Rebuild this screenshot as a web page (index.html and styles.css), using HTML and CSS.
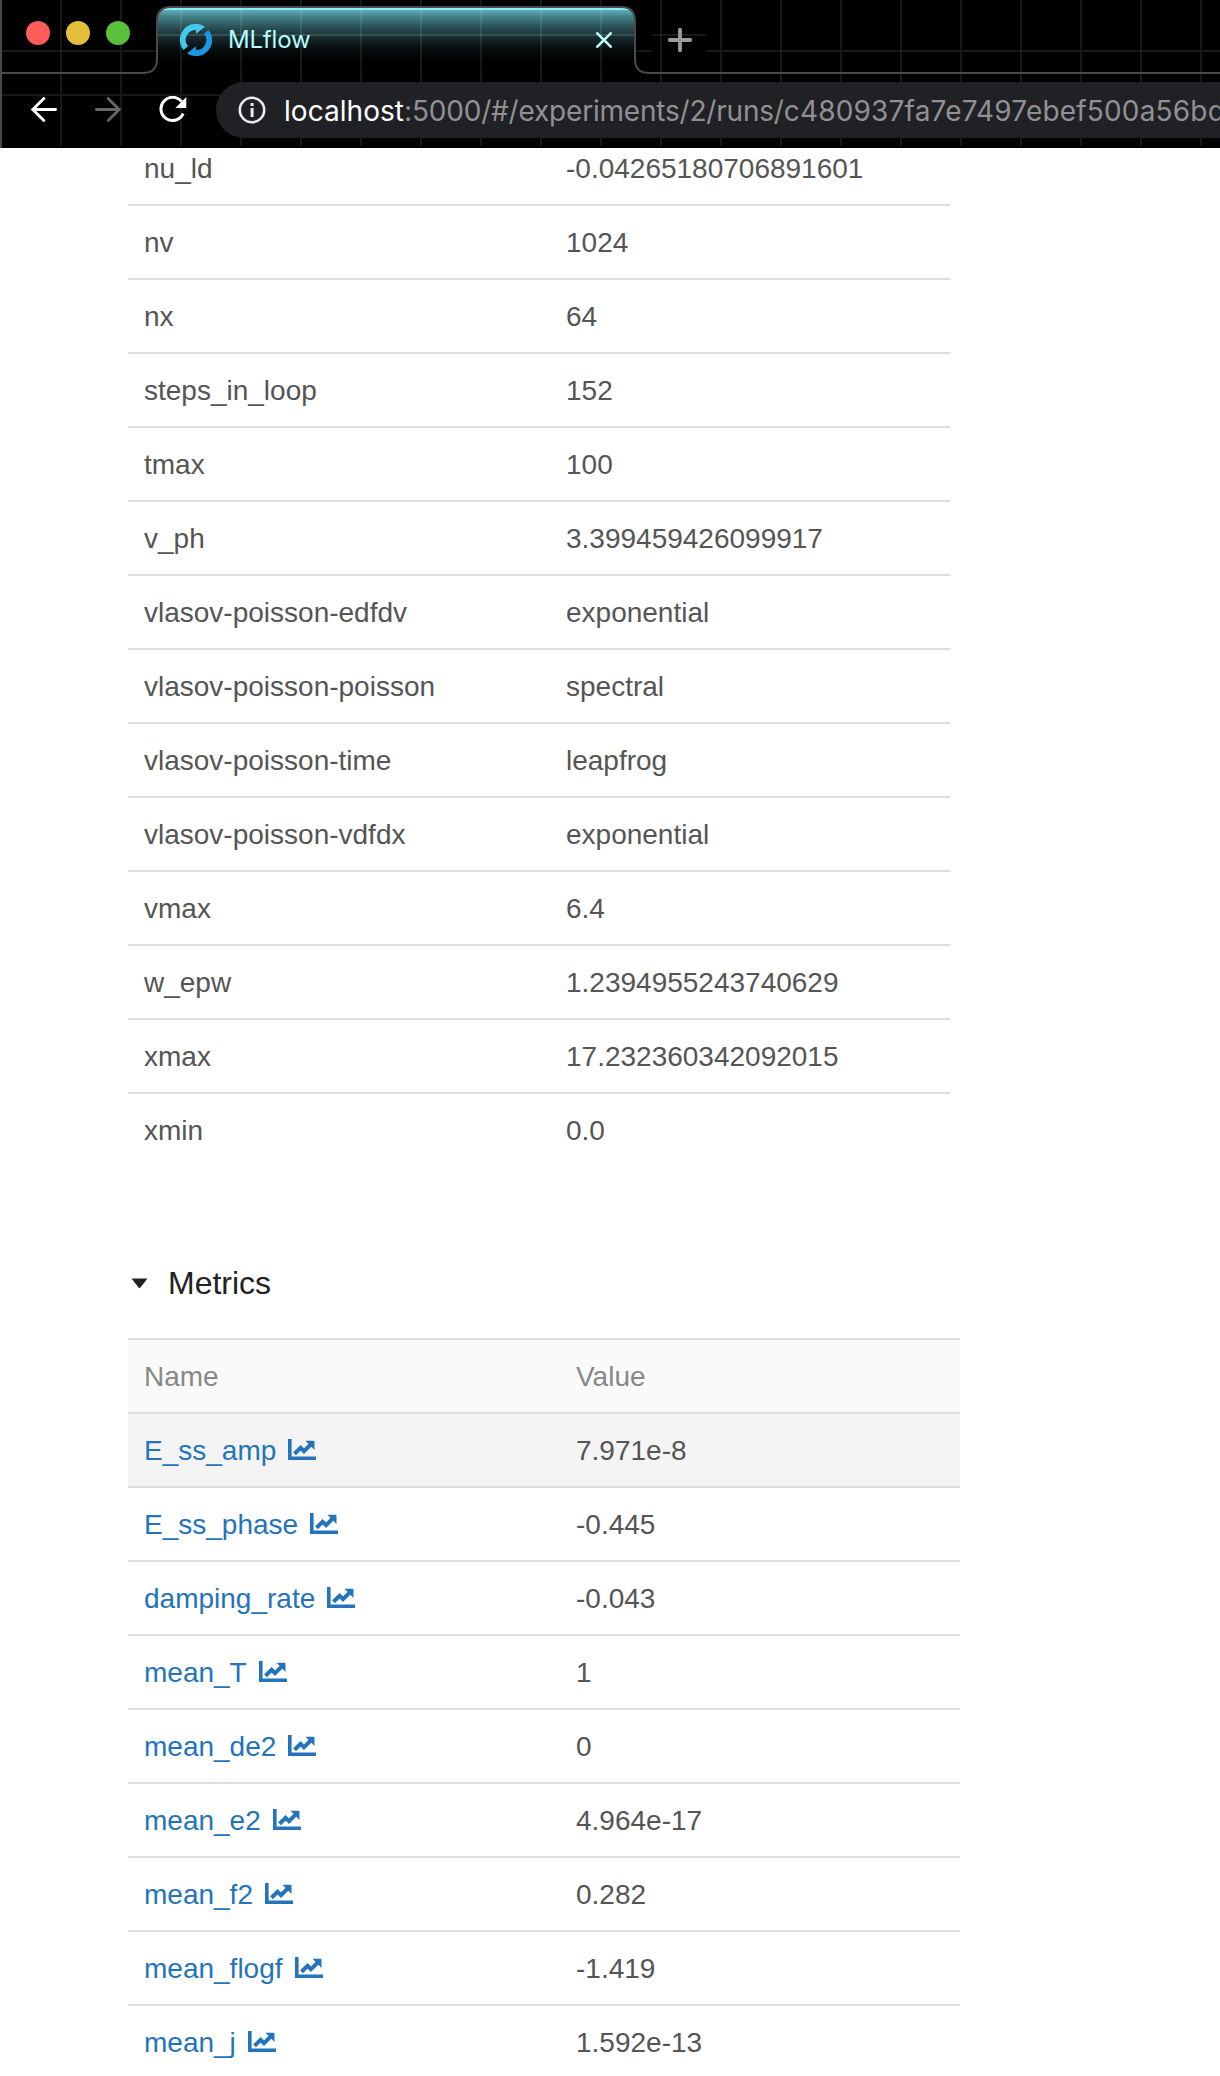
FILE: index.html
```html
<!DOCTYPE html>
<html lang="en">
<head>
<meta charset="utf-8">
<title>MLflow</title>
<link rel="stylesheet" href="styles.css">
</head>
<body>
<svg width="0" height="0" class="defs">
  <symbol id="chart" viewBox="0 0 28 21">
    <path d="M0 0h3.600v17.400H28V21H0z"/>
    <path d="M6.500 14.800L12.600 8.800L16 12.200L22.600 5.600" fill="none" stroke="currentColor" stroke-width="4"/>
    <path d="M17.500 1.800h7.900q1.100 0 1.100 1.100v8.100z"/>
  </symbol>
</svg>
<header class="chrome">
  <div class="tabstrip">
    <div class="lights"><i class="red"></i><i class="yellow"></i><i class="green"></i></div>
    <div class="tab">
      <svg class="logo" width="32" height="32" viewBox="0 0 32 32">
        <path fill="#43c9ed" d="M3.500 26A16 16 0 0 1 25 2.700L16 9.800V6A10 10 0 0 0 8 22.300z"/>
        <path fill="#1b95e4" d="M28.500 6A16 16 0 0 1 7 29.300L16 22.200V26A10 10 0 0 0 24 9.700z"/>
      </svg>
      <span class="title">MLflow</span>
      <svg class="close" width="16" height="16" viewBox="0 0 16 16"><path d="M1.300 1.300L14.700 14.700M14.700 1.300L1.300 14.700" stroke="#b5fcff" stroke-width="2.600" stroke-linecap="round"/></svg>
    </div>
    <div class="newtab"><svg width="24" height="24" viewBox="0 0 24 24"><path d="M12 1.800V22.200M1.800 12H22.200" stroke="#9b9b9b" stroke-width="3.800" stroke-linecap="round"/></svg></div>
    <svg class="outline" width="1220" height="148" viewBox="0 0 1220 148" fill="none" stroke="#4a4a4a" stroke-width="2"><path d="M0 73H143Q157 73 157 59V21Q157 7 171 7H621Q635 7 635 21V59Q635 73 649 73H1220"/></svg>
  </div>
  <div class="toolbar">
    <svg class="back" width="26" height="26" viewBox="0 0 26 26" fill="none" stroke="#fff" stroke-width="2.800" stroke-linecap="round"><path d="M24.600 12.500H2M12.800 1.400L1.800 12.500L12.800 23.600"/></svg>
    <svg class="forward" width="26" height="26" viewBox="0 0 26 26" fill="none" stroke="#666" stroke-width="2.800" stroke-linecap="round"><path d="M1.400 12.500H24M13.200 1.400L24.200 12.500L13.200 23.600"/></svg>
    <svg class="reload" width="28" height="28" viewBox="0 0 28 28" fill="none"><path d="M22.500 5.500A11.600 11.600 0 1 0 24.200 17.500" stroke="#fff" stroke-width="3"/><path d="M27.300 1V12H16.300z" fill="#fff"/></svg>
    <div class="omnibox">
      <svg class="info" width="28" height="28" viewBox="0 0 28 28" fill="none"><circle cx="14" cy="14" r="12.200" stroke="#e8eaed" stroke-width="2.600"/><path d="M12.600 7h3v3h-3zM12.600 12h3v9h-3z" fill="#e8eaed"/></svg>
      <span class="url"><b>localhost</b>:5000/#/experiments/2/runs/<span class="run-id">c480937fa7e7497ebef500a56bd</span></span>
    </div>
  </div>
</header>
<main class="page">
  <section class="params">
    <div class="row"><span>nu_ld</span><span>-0.04265180706891601</span></div>
    <div class="row"><span>nv</span><span>1024</span></div>
    <div class="row"><span>nx</span><span>64</span></div>
    <div class="row"><span>steps_in_loop</span><span>152</span></div>
    <div class="row"><span>tmax</span><span>100</span></div>
    <div class="row"><span>v_ph</span><span>3.399459426099917</span></div>
    <div class="row"><span>vlasov-poisson-edfdv</span><span>exponential</span></div>
    <div class="row"><span>vlasov-poisson-poisson</span><span>spectral</span></div>
    <div class="row"><span>vlasov-poisson-time</span><span>leapfrog</span></div>
    <div class="row"><span>vlasov-poisson-vdfdx</span><span>exponential</span></div>
    <div class="row"><span>vmax</span><span>6.4</span></div>
    <div class="row"><span>w_epw</span><span>1.2394955243740629</span></div>
    <div class="row"><span>xmax</span><span>17.232360342092015</span></div>
    <div class="row"><span>xmin</span><span>0.0</span></div>
  </section>
  <h2 class="heading"><svg width="17" height="11" viewBox="0 0 17 11"><path d="M.5.500H16.500L9.200 9.800Q8.500 10.500 7.800 9.800z" fill="#222"/></svg><span>Metrics</span></h2>
  <section class="metrics">
    <div class="row head"><span>Name</span><span>Value</span></div>
    <div class="row hover"><a>E_ss_amp<svg class="chart"><use href="#chart"/></svg></a><span>7.971e-8</span></div>
    <div class="row"><a>E_ss_phase<svg class="chart"><use href="#chart"/></svg></a><span>-0.445</span></div>
    <div class="row"><a>damping_rate<svg class="chart"><use href="#chart"/></svg></a><span>-0.043</span></div>
    <div class="row"><a>mean_T<svg class="chart"><use href="#chart"/></svg></a><span>1</span></div>
    <div class="row"><a>mean_de2<svg class="chart"><use href="#chart"/></svg></a><span>0</span></div>
    <div class="row"><a>mean_e2<svg class="chart"><use href="#chart"/></svg></a><span>4.964e-17</span></div>
    <div class="row"><a>mean_f2<svg class="chart"><use href="#chart"/></svg></a><span>0.282</span></div>
    <div class="row"><a>mean_flogf<svg class="chart"><use href="#chart"/></svg></a><span>-1.419</span></div>
    <div class="row"><a>mean_j<svg class="chart"><use href="#chart"/></svg></a><span>1.592e-13</span></div>
  </section>
</main>
</body>
</html>
```
FILE: styles.css
```css
* { box-sizing: border-box; }
body {
  margin: 0;
  height: 2076px;
  overflow: hidden;
  background: #fff;
  color: #555;
  font: 28px/32px "Liberation Sans", Arial, sans-serif;
}
.defs { position: absolute; }

/* Browser frame with its grid theme */
.chrome {
  position: relative;
  z-index: 1;
  height: 148px;
  overflow: hidden;
  background:
    linear-gradient(#484848, #484848) 0 0 / 2px 148px no-repeat,
    linear-gradient(#000, #000) 0 146px / 100% 2px no-repeat,
    linear-gradient(#181818, #181818) 0 50px / 100% 2px no-repeat,
    linear-gradient(#181818, #181818) 0 94px / 100% 2px no-repeat,
    repeating-linear-gradient(90deg, #181818 0 2px, #000 2px 60px);
}
.tabstrip { display: flex; height: 74px; }
.lights {
  display: flex;
  gap: 16px;
  width: 157px;
  padding: 21px 0 0 26px;
}
.lights i { width: 24px; height: 24px; border-radius: 50%; }
.red { background: #ff5c5a; }
.yellow { background: #e5bf3c; }
.green { background: #59c03a; }
.tab {
  display: flex;
  align-items: center;
  width: 478px;
  height: 67px;
  margin-top: 7px;
  padding: 0 23px;
  border-radius: 14px 14px 0 0;
  background:
    repeating-linear-gradient(90deg, transparent 0 23px, rgba(255,255,255,.09) 23px 25px, transparent 25px 60px),
    linear-gradient(rgba(255,255,255,.13), rgba(255,255,255,.13)) 0 27px / 100% 2px no-repeat,
    linear-gradient(#83edf8 0 3px, #62aeb7 3px, #427f87 10px, #2b5156 20px, #16292c 31px, #070d0e 42px, #000 55px);
}
.logo { align-self: flex-start; margin-top: 17px; }
.title {
  flex: 1;
  margin: 0 0 2px 16px;
  color: #b5fcff;
  font: 24px/30px Inter, sans-serif;
  letter-spacing: -.2px;
}
.close { margin-top: -1px; }
.newtab {
  width: 54px;
  height: 30px;
  margin: 25px 0 0 17px;
  padding: 3px 0 0 16px;
  background:
    linear-gradient(#181818, #181818) 0 9px / 100% 2px no-repeat,
    linear-gradient(#181818, #181818) 8px 0 / 2px 100% no-repeat,
    #000;
}
.newtab svg { display: block; }
.outline { position: absolute; left: 0; top: 0; }
.toolbar {
  display: flex;
  align-items: center;
  height: 72px;
  padding: 0 0 0 31px;
}
.forward { margin-left: 38px; }
.reload { margin-left: 38px; }
.omnibox {
  display: flex;
  align-items: center;
  width: 1030px;
  height: 56px;
  margin-left: 29px;
  padding-left: 22px;
  border-radius: 28px 0 0 28px;
  background: #202124;
}
.toolbar svg, .toolbar .omnibox { flex-shrink: 0; }
.url {
  margin: 2px 0 0 18px;
  color: #909193;
  font: 28px/36px Inter, sans-serif;
  letter-spacing: -.2px;
  white-space: nowrap;
}
.url b { color: #fff; font-weight: 400; letter-spacing: .05px; }
.run-id { letter-spacing: .18px; }

/* Run details */
.page { padding-left: 128px; }
.row {
  display: flex;
  align-items: center;
  height: 74px;
  padding: 2px 0 0 16px;
  border-bottom: 2px solid #ddd;
}
.row > :first-child { width: 422px; }
.params { width: 822px; margin-top: -16px; }
.params .row:last-child { padding-top: 0; border-bottom: 0; }
.heading {
  display: flex;
  align-items: center;
  gap: 20px;
  height: 36px;
  margin: 97px 0 37px;
  padding-left: 3px;
  color: #222;
  font-size: 32px;
  font-weight: 400;
}
.metrics { width: 832px; border-top: 2px solid #ddd; }
.metrics .row > :first-child { width: 432px; }
.row.head { background: #fafafa; color: #888; }
.row.hover { background: #f4f4f4; }
.row a { color: #2374bb; }
.chart { width: 28px; height: 21px; margin-left: 12px; fill: currentColor; }
```
